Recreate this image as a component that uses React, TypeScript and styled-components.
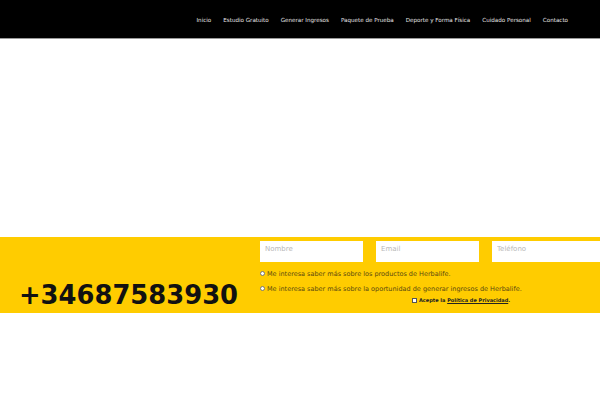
import React from "react";
import styled, { createGlobalStyle } from "styled-components";

const Global = createGlobalStyle`
  html, body { margin: 0; padding: 0; background: #fff; }
  body { font-family: "DejaVu Sans", "Liberation Sans", sans-serif; }
  * { box-sizing: border-box; }
`;

const Header = styled.header`
  height: 39px;
  background: #000;
  border-bottom: 1px solid #9a9a9a;
  display: flex;
  justify-content: flex-end;
  align-items: center;
  padding-right: 32px;
  padding-top: 2px;
`;

const Nav = styled.nav`
  display: flex;
  gap: 12px;
`;

const NavLink = styled.a`
  color: #e6e6e6;
  font-size: 5.6px;
  text-decoration: none;
  white-space: nowrap;
`;

const Spacer = styled.div`
  height: 198px;
`;

const Band = styled.section`
  height: 76px;
  background: #ffcc00;
  display: flex;
`;

const PhoneCol = styled.div`
  width: 260px;
  display: flex;
  align-items: flex-end;
  padding-left: 19px;
  padding-bottom: 4px;
`;

const Phone = styled.div`
  font-family: "DejaVu Sans", sans-serif;
  font-weight: bold;
  font-size: 25.8px;
  color: #111;
  line-height: 1;
`;

const Form = styled.form`
  flex: 1;
  display: flex;
  flex-direction: column;
  padding-top: 4px;
`;

const Inputs = styled.div`
  display: grid;
  grid-template-columns: 103px 103px 108px;
  column-gap: 13px;
`;

const Input = styled.input`
  height: 21px;
  border: none;
  background: #fff;
  padding: 0 5px 5px;
  font-family: "DejaVu Sans", sans-serif;
  font-size: 7px;
  color: #333;
  outline: none;
  &::placeholder { color: #b8b8b8; }
`;

const Option = styled.label`
  display: flex;
  align-items: center;
  gap: 2px;
  font-size: 6.5px;
  color: #5a4a10;
  height: 15px;
  margin-top: ${(p: { $mt: number }) => p.$mt}px;
`;

const Radio = styled.span`
  width: 5px;
  height: 5px;
  border-radius: 50%;
  background: #fff;
  border: 1px solid #777;
  display: inline-block;
`;

const Legal = styled.div`
  display: flex;
  align-items: center;
  gap: 2px;
  padding-left: 152px;
  font-size: 5px;
  font-weight: bold;
  color: #222;
  margin-top: 1px;
`;

const Box = styled.span`
  width: 5px;
  height: 5px;
  background: #fff;
  border: 1px solid #555;
  display: inline-block;
`;

const LegalLink = styled.a`
  color: #222;
  text-decoration: underline;
`;

const items = [
  "Inicio",
  "Estudio Gratuito",
  "Generar Ingresos",
  "Paquete de Prueba",
  "Deporte y Forma Física",
  "Cuidado Personal",
  "Contacto",
];

export default function App() {
  return (
    <>
      <Global />
      <Header>
        <Nav>
          {items.map((i) => (
            <NavLink key={i} href="#">{i}</NavLink>
          ))}
        </Nav>
      </Header>
      <Spacer />
      <Band>
        <PhoneCol>
          <Phone>+34687583930</Phone>
        </PhoneCol>
        <Form>
          <Inputs>
            <Input placeholder="Nombre" />
            <Input placeholder="Email" />
            <Input placeholder="Teléfono" />
          </Inputs>
          <Option $mt={4}>
            <Radio />
            Me interesa saber más sobre los productos de Herbalife.
          </Option>
          <Option $mt={0}>
            <Radio />
            Me interesa saber más sobre la oportunidad de generar ingresos de Herbalife.
          </Option>
          <Legal>
            <Box />
            <span>
              Acepte la <LegalLink href="#">Política de Privacidad</LegalLink>.
            </span>
          </Legal>
        </Form>
      </Band>
    </>
  );
}
